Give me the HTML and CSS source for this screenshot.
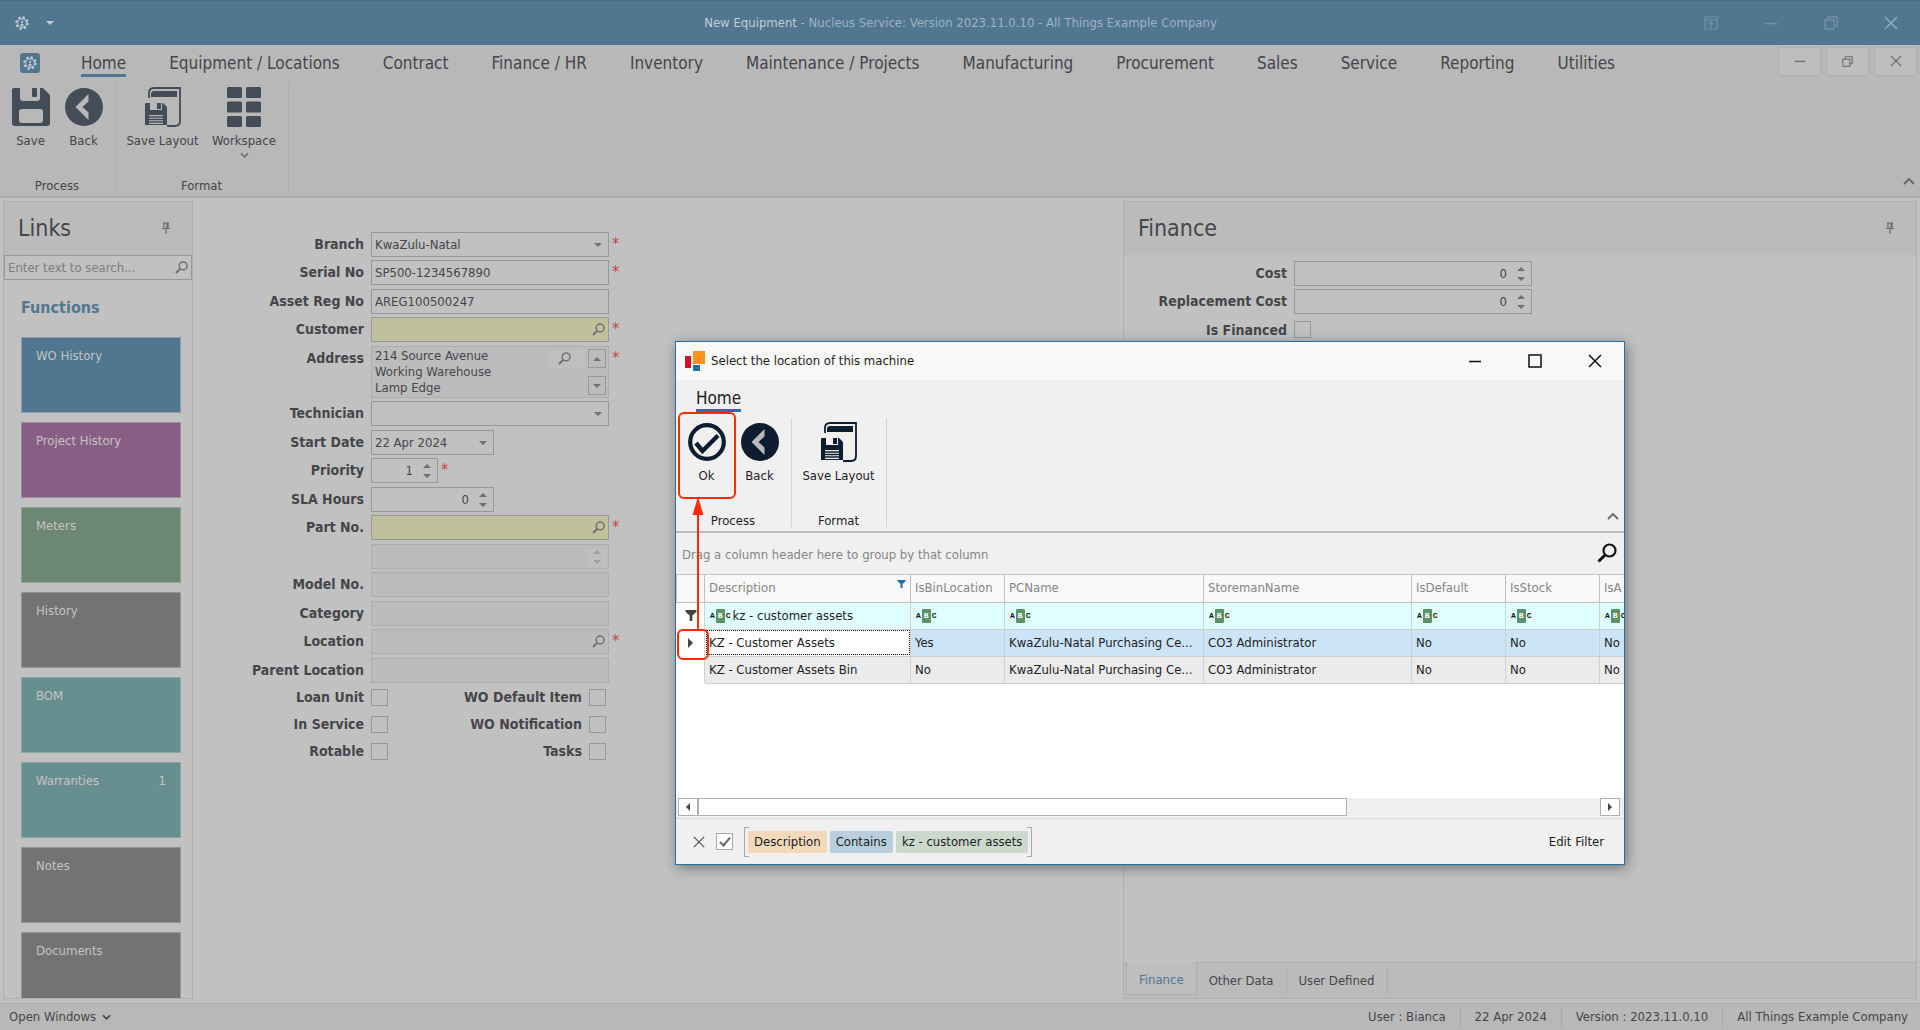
FILE: index.html
```html
<!DOCTYPE html>
<html lang="en">
<head>
    <meta charset="UTF-8">
    <meta name="viewport" content="width=device-width, initial-scale=1.0">
    <title>New Equipment - Nucleus Service</title>
    <link rel="stylesheet" href="styles.css">
</head>
<body>
    <!-- shared icons -->
    <svg class="sprite" aria-hidden="true">
        <symbol id="i-gear" viewBox="0 0 16 16">
            <circle cx="8" cy="8" r="6.6" fill="none" stroke="currentColor" stroke-width="2.2" stroke-dasharray="2.6 2.58"/>
            <circle cx="8" cy="8" r="5" fill="none" stroke="currentColor" stroke-width="1.2"/>
            <circle cx="8" cy="6.8" r="1.3" fill="currentColor"/>
            <path d="M6 11c0-3 4-3 4 0z" fill="currentColor"/>
        </symbol>
        <symbol id="i-save" viewBox="0 0 38 38">
            <path fill="currentColor" fill-rule="evenodd" d="M2 0h6v10q0 3 3 3h14q3 0 3-3V0h3l7 7v28q0 3-3 3H3q-3 0-3-3V2q0-2 2-2zM10 21q-3 0-3 3v8q0 3 3 3h18q3 0 3-3v-8q0-3-3-3z"/>
            <rect x="20" y="0" width="5" height="9" rx="1" fill="currentColor"/>
        </symbol>
        <symbol id="i-back" viewBox="0 0 38 38">
            <circle cx="19" cy="19" r="19" fill="currentColor"/>
            <path class="cut" d="M23.5 6v7.5L17.5 19l6 5.5V32L10.5 19z"/>
        </symbol>
        <symbol id="i-ok" viewBox="0 0 38 38">
            <circle cx="19" cy="19" r="16.8" fill="none" stroke="currentColor" stroke-width="4.2"/>
            <path d="M8 20l6.5 8L30 12.5" fill="none" stroke="currentColor" stroke-width="4.4"/>
        </symbol>
        <symbol id="i-layout" viewBox="0 0 36 40">
            <path d="M4 11V6q0-5 5-5h26v33q0 5-5 5h-8" fill="none" stroke="currentColor" stroke-width="1.8"/>
            <path d="M6 10V7q0-3 3-3h23v6z" fill="currentColor"/>
            <path fill="currentColor" fill-rule="evenodd" d="M1 16h4v7h12v-7h1l4 4v18H0V17q0-1 1-1zM4 28v9h14v-9z"/>
            <rect x="12" y="16" width="4" height="6" fill="currentColor"/>
            <path d="M4 30h14M4 32.5h14M4 35h14" stroke="currentColor" stroke-width="1.4"/>
        </symbol>
        <symbol id="i-workspace" viewBox="0 0 34 40">
            <g fill="currentColor"><rect width="15" height="11" rx="1.5"/><rect x="19" width="15" height="11" rx="1.5"/><rect y="14.5" width="15" height="11" rx="1.5"/><rect x="19" y="14.5" width="15" height="11" rx="1.5"/><rect y="29" width="15" height="11" rx="1.5"/><rect x="19" y="29" width="15" height="11" rx="1.5"/></g>
        </symbol>
        <symbol id="i-search" viewBox="0 0 20 20">
            <circle cx="12.5" cy="7.5" r="6" fill="none" stroke="currentColor" stroke-width="2.2"/>
            <path d="M8.5 11.5L1.5 18.5" stroke="currentColor" stroke-width="3"/>
        </symbol>
        <symbol id="i-pin" viewBox="0 0 10 12">
            <path d="M2 1h6M3 1v5M7 1v5M6 1v5M1 6.500h8M5 7v5" fill="none" stroke="currentColor" stroke-width="1.2"/>
        </symbol>
        <symbol id="i-down" viewBox="0 0 10 6"><path d="M1 1l4 4 4-4" fill="none" stroke="currentColor" stroke-width="1.8"/></symbol>
        <symbol id="i-up" viewBox="0 0 12 8"><path d="M1 7l5-5 5 5" fill="none" stroke="currentColor" stroke-width="1.8"/></symbol>
        <symbol id="i-min" viewBox="0 0 14 14"><path d="M1 7.5h12" stroke="currentColor" stroke-width="1.5"/></symbol>
        <symbol id="i-max" viewBox="0 0 14 14"><rect x="1" y="1" width="12" height="12" fill="none" stroke="currentColor" stroke-width="1.5"/></symbol>
        <symbol id="i-restore" viewBox="0 0 14 14"><path d="M1 4h9v9H1zM4 4V1h9v9h-3" fill="none" stroke="currentColor" stroke-width="1.3"/></symbol>
        <symbol id="i-close" viewBox="0 0 14 14"><path d="M1 1l12 12M13 1L1 13" stroke="currentColor" stroke-width="1.5"/></symbol>
        <symbol id="i-ribbonmode" viewBox="0 0 14 14"><path d="M1 1h12v12H1zM1 4h12M7 13V6M4.500 8.500L7 6l2.500 2.500" fill="none" stroke="currentColor" stroke-width="1.2"/></symbol>
        <symbol id="i-filter" viewBox="0 0 12 12"><path d="M0 0h12v2L7.5 6v6h-3V6L0 2z" fill="currentColor"/></symbol>
    </svg>

    <div class="app">
        <header class="titlebar">
            <div class="quick">
                <svg width="14" height="14"><use href="#i-gear"/></svg>
                <span class="caret"></span>
            </div>
            <p class="title">New Equipment <span>- Nucleus Service: Version 2023.11.0.10 - All Things Example Company</span></p>
            <div class="win-buttons">
                <button aria-label="Ribbon options"><svg width="14" height="14"><use href="#i-ribbonmode"/></svg></button>
                <button aria-label="Minimize"><svg width="14" height="14"><use href="#i-min"/></svg></button>
                <button aria-label="Restore"><svg width="14" height="14"><use href="#i-restore"/></svg></button>
                <button aria-label="Close" class="bright"><svg width="14" height="14"><use href="#i-close"/></svg></button>
            </div>
        </header>

        <div class="ribbon">
            <nav class="tabs">
                <button class="app-button" aria-label="Application menu"><svg width="14" height="14"><use href="#i-gear"/></svg></button>
                <a href="#" class="active">Home</a>
                <a href="#">Equipment / Locations</a>
                <a href="#">Contract</a>
                <a href="#">Finance / HR</a>
                <a href="#">Inventory</a>
                <a href="#">Maintenance / Projects</a>
                <a href="#">Manufacturing</a>
                <a href="#">Procurement</a>
                <a href="#">Sales</a>
                <a href="#">Service</a>
                <a href="#">Reporting</a>
                <a href="#">Utilities</a>
                <div class="mdi-buttons">
                    <button aria-label="Minimize document"><svg width="12" height="12"><use href="#i-min"/></svg></button>
                    <button aria-label="Restore document"><svg width="11" height="11"><use href="#i-restore"/></svg></button>
                    <button aria-label="Close document"><svg width="12" height="12"><use href="#i-close"/></svg></button>
                </div>
            </nav>
            <div class="groups">
                <section class="group">
                    <div class="tools">
                        <button class="tool"><svg width="38" height="40"><use href="#i-save"/></svg>Save</button>
                        <button class="tool"><svg width="38" height="40"><use href="#i-back"/></svg>Back</button>
                    </div>
                    <h2>Process</h2>
                </section>
                <section class="group">
                    <div class="tools">
                        <button class="tool wide"><svg width="36" height="40"><use href="#i-layout"/></svg>Save Layout</button>
                        <button class="tool mid"><svg width="34" height="40"><use href="#i-workspace"/></svg>Workspace<svg class="more" width="9" height="6"><use href="#i-down"/></svg></button>
                    </div>
                    <h2>Format</h2>
                </section>
                <button class="collapse" aria-label="Collapse ribbon"><svg width="12" height="8"><use href="#i-up"/></svg></button>
            </div>
        </div>

        <main class="workarea">
            <aside class="panel links">
                <header class="panel-head"><h2>Links</h2><svg width="10" height="12"><use href="#i-pin"/></svg></header>
                <div class="field search">
                    <input type="text" placeholder="Enter text to search..." aria-label="Search links">
                    <svg class="glass" width="13" height="13"><use href="#i-search"/></svg>
                </div>
                <h3>Functions</h3>
                <div class="tiles">
                    <button class="tile blue">WO History</button>
                    <button class="tile purple">Project History</button>
                    <button class="tile green">Meters</button>
                    <button class="tile gray">History</button>
                    <button class="tile teal">BOM</button>
                    <button class="tile teal">Warranties<span>1</span></button>
                    <button class="tile gray">Notes</button>
                    <button class="tile gray">Documents</button>
                </div>
            </aside>

            <form class="equipment">
                <div class="row"><label for="branch">Branch</label><div class="field drop"><select id="branch"><option>KwaZulu-Natal</option></select></div><em>*</em></div>
                <div class="row"><label for="serial">Serial No</label><div class="field"><input id="serial" type="text" value="SP500-1234567890"></div><em>*</em></div>
                <div class="row"><label for="asset">Asset Reg No</label><div class="field"><input id="asset" type="text" value="AREG100500247"></div></div>
                <div class="row"><label for="customer">Customer</label><div class="field needed"><input id="customer" type="text"><svg class="glass" width="13" height="13"><use href="#i-search"/></svg></div><em>*</em></div>
                <div class="row"><label for="address">Address</label>
                    <div class="field locked address">
                        <textarea id="address" readonly>214 Source Avenue
Working Warehouse
Lamp Edge</textarea>
                        <button type="button" class="lookup" aria-label="Find address"><svg width="13" height="13"><use href="#i-search"/></svg></button>
                        <div class="scroll"><button type="button" class="arrow up" aria-label="Scroll up"></button><button type="button" class="arrow down" aria-label="Scroll down"></button></div>
                    </div><em>*</em></div>
                <div class="row"><label for="technician">Technician</label><div class="field drop"><select id="technician"><option></option></select></div></div>
                <div class="row"><label for="start">Start Date</label><div class="field drop medium"><select id="start"><option>22 Apr 2024</option></select></div></div>
                <div class="row"><label for="priority">Priority</label><div class="field spin short"><input id="priority" type="number" value="1"></div><em>*</em></div>
                <div class="row"><label for="sla">SLA Hours</label><div class="field spin medium"><input id="sla" type="number" value="0"></div></div>
                <div class="row"><label for="part">Part No.</label><div class="field needed"><input id="part" type="text"><svg class="glass" width="13" height="13"><use href="#i-search"/></svg></div><em>*</em></div>
                <div class="row"><span></span><div class="field locked"><input type="text" readonly aria-label="Part description"><div class="scroll faint"><button type="button" class="arrow up" aria-label="Scroll up"></button><button type="button" class="arrow down" aria-label="Scroll down"></button></div></div></div>
                <div class="row"><label for="model">Model No.</label><div class="field locked"><input id="model" type="text" readonly></div></div>
                <div class="row"><label for="category">Category</label><div class="field locked"><input id="category" type="text" readonly></div></div>
                <div class="row"><label for="location">Location</label><div class="field locked"><input id="location" type="text" readonly><svg class="glass" width="13" height="13"><use href="#i-search"/></svg></div><em>*</em></div>
                <div class="row"><label for="parent">Parent Location</label><div class="field locked"><input id="parent" type="text" readonly></div></div>
                <div class="checks">
                    <label for="loan">Loan Unit</label><input id="loan" type="checkbox">
                    <label for="default">WO Default Item</label><input id="default" type="checkbox">
                    <label for="inservice">In Service</label><input id="inservice" type="checkbox">
                    <label for="notify">WO Notification</label><input id="notify" type="checkbox">
                    <label for="rotable">Rotable</label><input id="rotable" type="checkbox">
                    <label for="tasks">Tasks</label><input id="tasks" type="checkbox">
                </div>
            </form>

            <aside class="panel finance">
                <header class="panel-head"><h2>Finance</h2><svg width="10" height="12"><use href="#i-pin"/></svg></header>
                <form class="finance-form">
                    <div class="row"><label for="cost">Cost</label><div class="field spin"><input id="cost" type="number" value="0"></div></div>
                    <div class="row"><label for="replacement">Replacement Cost</label><div class="field spin"><input id="replacement" type="number" value="0"></div></div>
                    <div class="row"><label for="financed">Is Financed</label><input id="financed" type="checkbox"></div>
                </form>
                <nav class="panel-tabs">
                    <a href="#" class="active">Finance</a>
                    <a href="#">Other Data</a>
                    <a href="#">User Defined</a>
                </nav>
            </aside>
        </main>

        <footer class="statusbar">
            <button>Open Windows <svg width="9" height="6"><use href="#i-down"/></svg></button>
            <ul>
                <li>User : Bianca</li>
                <li>22 Apr 2024</li>
                <li>Version : 2023.11.0.10</li>
                <li>All Things Example Company</li>
            </ul>
        </footer>
    </div>

    <div class="dialog" role="dialog" aria-labelledby="dialogTitle">
        <header class="dialog-title">
            <svg width="20" height="20" viewBox="0 0 20 20"><path fill="#d0112b" d="M0 5h6v12H0z"/><path fill="#f7941d" d="M8 0h12v13H8z"/><path fill="#2470a0" d="M8 14h7v6H8z"/></svg>
            <h1 id="dialogTitle">Select the location of this machine</h1>
            <div class="dialog-buttons">
                <button aria-label="Minimize"><svg width="14" height="14"><use href="#i-min"/></svg></button>
                <button aria-label="Maximize"><svg width="14" height="14"><use href="#i-max"/></svg></button>
                <button aria-label="Close"><svg width="14" height="14"><use href="#i-close"/></svg></button>
            </div>
        </header>
        <div class="ribbon">
            <nav class="tabs"><a href="#" class="active">Home</a></nav>
            <div class="groups">
                <section class="group">
                    <div class="tools">
                        <button class="tool marked"><svg width="38" height="40"><use href="#i-ok"/></svg>Ok</button>
                        <button class="tool"><svg width="38" height="40"><use href="#i-back"/></svg>Back</button>
                    </div>
                    <h2>Process</h2>
                </section>
                <section class="group">
                    <div class="tools">
                        <button class="tool wide"><svg width="36" height="40"><use href="#i-layout"/></svg>Save Layout</button>
                    </div>
                    <h2>Format</h2>
                </section>
                <button class="collapse" aria-label="Collapse ribbon"><svg width="12" height="8"><use href="#i-up"/></svg></button>
            </div>
        </div>
        <div class="group-panel">
            <p>Drag a column header here to group by that column</p>
            <button aria-label="Search grid"><svg width="20" height="20"><use href="#i-search"/></svg></button>
        </div>
        <div class="grid-view">
            <table>
                <colgroup><col class="c-mark"><col class="c-desc"><col class="c-flag"><col class="c-pc"><col class="c-store"><col class="c-flag"><col class="c-flag"><col class="c-flag"></colgroup>
                <thead>
                    <tr><th></th><th>Description<svg class="funnel" width="9" height="8"><use href="#i-filter"/></svg></th><th>IsBinLocation</th><th>PCName</th><th>StoremanName</th><th>IsDefault</th><th>IsStock</th><th>IsA</th></tr>
                </thead>
                <tbody>
                    <tr class="filter-row">
                        <td><svg width="12" height="11"><use href="#i-filter"/></svg></td>
                        <td><div class="filter-cell"><span class="abc">A<b>B</b>C</span><input type="text" value="kz - customer assets" aria-label="Filter description"></div></td>
                        <td><span class="abc">A<b>B</b>C</span></td>
                        <td><span class="abc">A<b>B</b>C</span></td>
                        <td><span class="abc">A<b>B</b>C</span></td>
                        <td><span class="abc">A<b>B</b>C</span></td>
                        <td><span class="abc">A<b>B</b>C</span></td>
                        <td><span class="abc">A<b>B</b>C</span></td>
                    </tr>
                    <tr class="selected"><td class="marked"><span class="pointer"></span></td><td class="focused">KZ - Customer Assets</td><td>Yes</td><td>KwaZulu-Natal Purchasing Ce...</td><td>CO3 Administrator</td><td>No</td><td>No</td><td>No</td></tr>
                    <tr><td></td><td>KZ - Customer Assets Bin</td><td>No</td><td>KwaZulu-Natal Purchasing Ce...</td><td>CO3 Administrator</td><td>No</td><td>No</td><td>No</td></tr>
                </tbody>
            </table>
        </div>
        <div class="hscroll">
            <button class="arrow left" aria-label="Scroll left"></button>
            <div class="track"><div class="thumb"></div></div>
            <button class="arrow right" aria-label="Scroll right"></button>
        </div>
        <footer class="filter-panel">
            <button class="clear" aria-label="Clear filter"><svg width="12" height="12"><use href="#i-close"/></svg></button>
            <input type="checkbox" checked aria-label="Enable filter">
            <div class="criteria"><span class="chip column">Description</span><span class="chip operator">Contains</span><span class="chip value">kz - customer assets</span></div>
            <button class="edit">Edit Filter</button>
        </footer>
        <svg class="guide" width="12" height="134" viewBox="0 0 12 134"><path d="M6 14v120" stroke="#ff2a00" stroke-width="2"/><path d="M6 0l5.5 18H.5z" fill="#ff2a00"/></svg>
    </div>
</body>
</html>
```

FILE: styles.css
```css
* { box-sizing: border-box; }

body {
    margin: 0;
    font-family: "DejaVu Sans Condensed", "DejaVu Sans", sans-serif;
    font-size: 13px;
    line-height: 16px;
    color: #45454a;
    background: #c1c1c1;
    overflow: hidden;
}
h1, h2, h3, p, ul { margin: 0; padding: 0; font-weight: normal; }
button, input, select, textarea { font: inherit; color: inherit; }
button { background: none; border: none; padding: 0; }
a { color: inherit; text-decoration: none; }
svg { display: block; flex: none; }
.sprite { position: absolute; width: 0; height: 0; }

.app {
    display: grid;
    grid-template-rows: auto auto minmax(0, 1fr) auto;
    height: 100vh;
}

/* title bar */
.titlebar {
    display: grid;
    grid-template-columns: 1fr auto 1fr;
    align-items: center;
    height: 45px;
    padding: 0 14px 0 15px;
    background: #517690;
    border-top: 1px solid #4a6b82;
    color: #c4cdd3;
}
.titlebar .title span { color: #9db3c1; }
.quick { display: flex; align-items: center; gap: 17px; }
.caret { border: 4px solid transparent; border-top-color: #c4cdd3; border-bottom: none; }
.win-buttons { display: flex; justify-content: flex-end; gap: 46px; padding-right: 8px; color: #7592a5; }
.win-buttons .bright { color: #93aab9; }

/* ribbon */
.ribbon {
    background: #b8b8b8;
    border-bottom: 2px solid #adadad;
    height: 153px;
}
.tabs { display: flex; align-items: center; gap: 43px; height: 35px; padding-left: 20px; font-size: 17px; line-height: 21px; }
.tabs a { padding-top: 4px; border-bottom: 3px solid transparent; white-space: nowrap; }
.tabs a.active { border-color: #517690; }
.app-button {
    display: flex;
    align-items: center;
    justify-content: center;
    width: 20px;
    height: 20px;
    border-radius: 3px;
    background: #517690;
    color: #c4cdd3;
    margin-right: -2px;
}
.mdi-buttons { display: flex; gap: 5px; margin: -3px 3px 0 auto; color: #6a6a6a; }
.mdi-buttons button {
    display: flex;
    align-items: center;
    justify-content: center;
    width: 43px;
    height: 29px;
    background: #bebebe;
    border: 1px solid #b0b0b0;
    border-radius: 2px;
}
.groups { display: flex; padding-top: 3px; }
.group { display: flex; flex-direction: column; justify-content: space-between; align-items: center; height: 109px; padding: 4px 6px 0 5px; border-right: 1px solid #adadad; }
.group h2 { font-size: 13px; line-height: 12px; }
.tools { display: flex; gap: 2px; }
.tool { display: flex; flex-direction: column; align-items: center; width: 51px; gap: 6px; white-space: nowrap; position: relative; }
.tool.wide { width: 83px; }
.tool.mid { width: 76px; }
.tool svg { color: #434c57; }
.tool .more { color: #6a6a6a; margin-top: -3px; }
.cut { fill: #b8b8b8; }
.collapse { margin: auto 5px 7px auto; color: #666; }

/* docked panels */
.workarea {
    display: grid;
    grid-template-columns: 190px 930fr 794fr;
    padding: 3px 3px 4px;
    min-height: 0;
}
.panel { display: flex; flex-direction: column; border: 1px solid #afafaf; min-height: 0; }
.panel-head { display: flex; align-items: center; justify-content: space-between; flex: none; height: 53px; padding: 0 21px 2px 14px; background: #bbb; }
.panel-head h2 { font-size: 23px; line-height: 28px; }
.panel-head svg { color: #6a6a6a; }
.links { overflow: hidden; }
.links h3 { margin: 18px 17px 19px; font-size: 16px; line-height: 20px; font-weight: bold; color: #517690; }
.tiles { display: flex; flex-direction: column; gap: 9px; padding: 0 11px 0 17px; }
.tile {
    display: flex;
    justify-content: space-between;
    flex: none;
    height: 76px;
    padding: 10px 14px;
    border: 1px solid #8f9ea8;
    color: #c4c4c4;
}
.blue { background: #517690; }
.purple { background: #885e84; border-color: #a08a9d; }
.green { background: #6c8872; border-color: #8fa293; }
.gray { background: #737373; border-color: #959595; }
.teal { background: #688f90; border-color: #8da7a8; }

/* fields */
.field { position: relative; display: flex; width: 238px; height: 25px; border: 1px solid #989898; }
.field input, .field select, .field textarea {
    width: 100%;
    border: none;
    background: none;
    padding: 0 3px;
    outline: none;
    appearance: none;
}
.field input[type=number] { appearance: textfield; text-align: right; padding-right: 24px; }
.field input::-webkit-inner-spin-button { appearance: none; }
.field input::placeholder { color: #7d7d7d; opacity: 1; }
.field.needed { background: #c1c09d; }
.field.locked { background: #bcbcbc; border-color: #adadad; }
.field.medium { width: 123px; }
.field.short { width: 67px; }
.glass { position: absolute; right: 3px; top: 5px; color: #707070; }
.drop::after, .spin::before, .spin::after {
    content: "";
    position: absolute;
    right: 6px;
    border: 4px solid transparent;
}
.drop::after { top: 10px; border-top-color: #707070; border-bottom: none; }
.spin::before { top: 5px; border-bottom-color: #707070; border-top: none; }
.spin::after { bottom: 4px; border-top-color: #707070; border-bottom: none; }
.field.search { width: auto; flex: none; }
.row { display: grid; grid-template-columns: 171px auto 1fr; column-gap: 7px; }
.row label { text-align: right; font-size: 14px; font-weight: bold; line-height: 25px; }
.row em { font-style: normal; font-size: 16px; line-height: 24px; color: #c4484c; margin-left: -4px; }
.equipment { padding: 31px 0 0; }
.row:nth-child(odd) { margin-bottom: 3px; }
.row:nth-child(even) { margin-bottom: 4px; }
.field.address { height: 52px; }
.field.address textarea { resize: none; overflow: hidden; padding-top: 1px; }
.lookup { position: absolute; right: 25px; top: 2px; padding: 3px 12px; background: #bfbfbf; color: #707070; }
.scroll { display: flex; flex-direction: column; justify-content: space-between; padding: 2px; }
.arrow { display: flex; align-items: center; justify-content: center; width: 18px; height: 19px; border: 1px solid #989898; }
.arrow::after { content: ""; border: 4px solid transparent; }
.arrow.up::after { border-bottom-color: #707070; border-top: none; }
.arrow.down::after { border-top-color: #707070; border-bottom: none; }
.arrow.left::after { border-right-color: #444; border-left: none; }
.arrow.right::after { border-left-color: #444; border-right: none; }
.faint .arrow { height: 9px; border: none; background: #bfbfbf; }
.faint .arrow::after { opacity: .4; }

input[type=checkbox] {
    appearance: none;
    width: 17px;
    height: 17px;
    margin: 0;
    border: 1px solid #989898;
}
.checks { display: grid; grid-template-columns: 171px 17px 187px 17px; gap: 10px 7px; padding-top: 3px; justify-content: start; }
.checks label { text-align: right; font-size: 14px; font-weight: bold; line-height: 17px; }

/* finance */
.finance-form { flex: 1; padding-top: 6px; }
.finance-form .row { grid-template-columns: 163px auto 1fr; }
.finance-form input[type=checkbox] { margin-top: 3px; }
.panel-tabs { display: flex; height: 36px; background: #bbb; border-top: 1px solid #afafaf; padding-left: 2px; }
.panel-tabs a { height: 26px; margin-top: 5px; padding: 0 12px; line-height: 26px; border-right: 1px solid #adadad; }
.panel-tabs a.active { height: 33px; margin-top: -1px; padding: 5px 12px 0; background: #bebebe; border: 1px solid #adadad; border-top: none; color: #517690; }

.statusbar { display: flex; justify-content: space-between; align-items: center; height: 27px; padding: 0 12px 0 9px; background: #b8b8b8; border-top: 1px solid #adadad; }
.statusbar button { display: flex; align-items: center; gap: 6px; }
.statusbar ul { display: flex; list-style: none; }
.statusbar li { padding: 3px 14px; border-right: 1px solid #a8a8a8; }
.statusbar li:last-child { padding-right: 0; border: none; }

/* dialog window */
.dialog {
    position: absolute;
    left: 675px;
    top: 341px;
    width: 950px;
    height: 524px;
    display: flex;
    flex-direction: column;
    color: #1d1d24;
    background: #fff;
    border: 1px solid #2470a0;
    box-shadow: 2px 3px 12px rgba(0, 0, 0, .4);
}
.dialog > * { flex: none; }
.dialog-title { display: flex; align-items: center; gap: 6px; height: 38px; padding: 0 22px 0 9px; background: #f8f8f8; }
.dialog-title h1 { font-size: 13px; }
.dialog-buttons { display: flex; gap: 46px; margin-left: auto; color: #111; }
.dialog .ribbon { background: #f0f0f0; border-color: #bcbcbc; }
.dialog .tabs { padding-left: 20px; }
.dialog .tabs a.active { border-color: #2470a0; }
.dialog .tool svg { color: #0d1c2e; }
.dialog .cut { fill: #f0f0f0; }
.dialog .group { border-color: #d4d4d4; }
.tool.marked::after {
    content: "";
    position: absolute;
    left: -3px;
    top: -10px;
    width: 54px;
    height: 83px;
    border: 2px solid #ff2a00;
    border-radius: 6px;
}
.group-panel { display: flex; align-items: center; justify-content: space-between; height: 42px; padding: 2px 7px 0 6px; background: #f0f0f0; border-bottom: 1px solid #c4c4c4; color: #858585; }
.group-panel button { color: #111; margin-top: -3px; }
.dialog .grid-view { flex: 1; overflow: hidden; }
table { width: 1016px; table-layout: fixed; border-collapse: collapse; }
.c-mark { width: 28px; }
.c-desc { width: 206px; }
.c-flag { width: 94px; }
.c-pc { width: 199px; }
.c-store { width: 208px; }
th, td { height: 27px; padding: 0 4px; border: 1px solid #d0d0d0; text-align: left; white-space: nowrap; overflow: hidden; text-overflow: clip; }
th { position: relative; font-weight: normal; color: #858585; background: #f8f8f8; border-color: #c0c0c0; border-top: none; }
td { background: #ebebeb; }
.filter-row td { background: #e0ffff; }
.selected td { background: #cce4f7; }
tr td:first-child { background: #fff; border-color: #fff #d0d0d0 #fff #fff; padding-left: 8px; color: #444; }
.selected td.focused { background: #fff; outline: 1px dotted #111; outline-offset: -2px; }
.funnel { position: absolute; right: 4px; top: 5px; color: #2470a0; }
.filter-cell { display: flex; align-items: center; }
.filter-cell input { width: 150px; border: none; padding: 0 2px; background: none; outline: none; }
.abc { display: inline-flex; align-items: center; gap: 1px; padding-left: 1px; font: bold 8px/14px "Liberation Mono", monospace; color: #111; vertical-align: middle; }
.abc b { padding: 0 2px; background: #5a9367; color: #fff; border-radius: 1px; }
td.marked { position: relative; overflow: visible; }
.marked .pointer { display: block; width: 0; margin-left: 3px; border: 5px solid transparent; border-left-color: #444; border-right: none; }
td.marked::after {
    content: "";
    position: absolute;
    left: 0;
    top: -1px;
    width: 28px;
    height: 27px;
    border: 2px solid #ff2a00;
    border-radius: 6px;
}
.hscroll { display: flex; height: 21px; padding: 0 4px 2px 2px; background: #f0f0f0; border-bottom: 1px solid #d8d8d8; }
.hscroll .arrow { width: 20px; height: 18px; background: #fff; border-color: #b0b0b0; }
.track { flex: 1; }
.thumb { width: 72%; height: 18px; background: #fff; border: 1px solid #b0b0b0; }
.filter-panel { display: flex; align-items: center; height: 45px; padding: 0 20px 0 17px; background: #f0f0f0; }
.clear { color: #555; margin-right: 11px; }
.filter-panel input[type=checkbox] { position: relative; background: #fff; border-color: #a8a8a8; margin-right: 11px; }
.filter-panel input[type=checkbox]::after { content: ""; position: absolute; left: 5px; top: 1px; width: 4px; height: 9px; border: solid #666; border-width: 0 2px 2px 0; transform: rotate(40deg); }
.criteria { position: relative; display: flex; gap: 3px; padding: 4px; }
.criteria::before, .criteria::after { content: ""; position: absolute; top: 0; bottom: 0; width: 4px; border: 1px solid #a8a8a8; }
.criteria::before { left: 0; border-right: none; }
.criteria::after { right: 0; border-left: none; }
.chip { padding: 3px 6px; border-radius: 2px; }
.column { background: #f3d9bb; }
.operator { background: #bacfdd; }
.value { background: #cbd9cd; }
.edit { margin-left: auto; }
.guide { position: absolute; left: 16px; top: 155px; }
```
